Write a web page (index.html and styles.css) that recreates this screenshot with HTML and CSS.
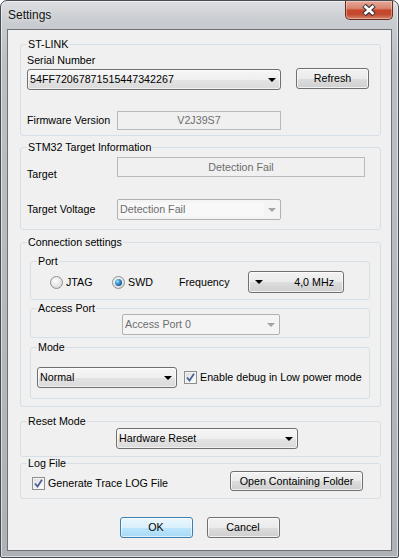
FILE: index.html
```html
<!DOCTYPE html>
<html>
<head>
<meta charset="utf-8">
<title>Settings</title>
<link rel="stylesheet" href="styles.css">
</head>
<body>
<div class="window">
  <div class="titlebar">
    <span class="title">Settings</span>
    <div class="close">
      <svg width="16" height="12" viewBox="0 0 16 12">
        <path d="M3 1.5 L13 10.5 M13 1.5 L3 10.5" stroke="#3a3a3a" stroke-width="5" fill="none"/>
        <path d="M3.5 2 L12.5 10 M12.5 2 L3.5 10" stroke="#ffffff" stroke-width="2.6" fill="none"/>
      </svg>
    </div>
  </div>
  <div class="client">
    <fieldset class="group g-stlink">
      <legend>ST-LINK</legend>
      <div class="gbody b-stlink">
        <div class="lbl">Serial Number</div>
        <div class="row r-serial">
          <div class="combo cb-serial"><span>54FF72067871515447342267</span><span class="arrow"></span></div>
          <div class="btn b-refresh">Refresh</div>
        </div>
        <div class="row r-fw">
          <span class="lbl w90">Firmware Version</span>
          <div class="field f-fw">V2J39S7</div>
        </div>
      </div>
    </fieldset>

    <fieldset class="group g-target">
      <legend>STM32 Target Information</legend>
      <div class="gbody b-target">
        <div class="row r-target">
          <span class="lbl w90 lbl-low">Target</span>
          <div class="field f-target">Detection Fail</div>
        </div>
        <div class="row r-volt">
          <span class="lbl w90">Target Voltage</span>
          <div class="combo dis cb-volt"><span class="dtext">Detection Fail</span><span class="arrow"></span></div>
        </div>
      </div>
    </fieldset>

    <fieldset class="group g-conn">
      <legend>Connection settings</legend>
      <div class="gbody b-conn">
        <fieldset class="group sub g-port">
          <legend>Port</legend>
          <div class="gbody b-port">
            <div class="row r-port">
              <span class="opt o-jtag"><span class="radio"></span><span class="otext">JTAG</span></span>
              <span class="opt o-swd"><span class="radio on"><span class="rdot"></span></span><span class="otext">SWD</span></span>
              <span class="lbl l-freq">Frequency</span>
              <div class="btn b-freq"><span class="arrow"></span><span>4,0 MHz</span></div>
            </div>
          </div>
        </fieldset>
        <fieldset class="group sub g-ap">
          <legend>Access Port</legend>
          <div class="gbody b-ap">
            <div class="combo dis cb-ap"><span>Access Port 0</span><span class="arrow"></span></div>
          </div>
        </fieldset>
        <fieldset class="group sub g-mode">
          <legend>Mode</legend>
          <div class="gbody b-mode">
            <div class="row r-mode">
              <div class="combo cb-mode"><span>Normal</span><span class="arrow"></span></div>
              <span class="chk c-mode">
                <svg width="9" height="9" viewBox="0 0 9 9"><path d="M1 4.5 L3.5 7.5 L8 0.8" stroke="#4a5f97" stroke-width="1.8" fill="none"/></svg>
              </span>
              <span class="lbl l-mode">Enable debug in Low power mode</span>
            </div>
          </div>
        </fieldset>
      </div>
    </fieldset>

    <fieldset class="group g-reset">
      <legend>Reset Mode</legend>
      <div class="gbody b-reset">
        <div class="combo cb-reset"><span>Hardware Reset</span><span class="arrow"></span></div>
      </div>
    </fieldset>

    <fieldset class="group g-log">
      <legend>Log File</legend>
      <div class="gbody b-log">
        <div class="row r-log">
          <span class="logchk">
            <span class="chk">
              <svg width="9" height="9" viewBox="0 0 9 9"><path d="M1 4.5 L3.5 7.5 L8 0.8" stroke="#4a5f97" stroke-width="1.8" fill="none"/></svg>
            </span>
            <span class="lbl l-log">Generate Trace LOG File</span>
          </span>
          <div class="btn b-open">Open Containing Folder</div>
        </div>
      </div>
    </fieldset>

    <div class="dlg-buttons">
      <div class="btn b-ok">OK</div>
      <div class="btn b-cancel">Cancel</div>
    </div>
  </div>
</div>
</body>
</html>
```

FILE: styles.css
```css
* { box-sizing: border-box; }
html, body { margin: 0; padding: 0; }
body {
  width: 399px;
  height: 558px;
  overflow: hidden;
  background: #ffffff;
  font-family: "Liberation Sans", Arial, sans-serif;
  font-size: 10.7px;
  line-height: 13px;
  color: #000;
}
.window {
  width: 399px;
  height: 558px;
  border: 1px solid #474c52;
  border-radius: 7px 7px 2px 2px;
  background: linear-gradient(to bottom, #dcdee1 0px, #c9ccd0 20px, #bcc0c4 60px, #aeb2b7 100%);
  display: flex;
  flex-direction: column;
  overflow: hidden;
  box-shadow: inset 0 0 0 1px rgba(255,255,255,0.55);
}
.titlebar {
  height: 28px;
  flex: none;
  display: flex;
  justify-content: space-between;
  align-items: flex-start;
  padding: 0 5px 0 7px;
}
.title {
  font-size: 12px;
  line-height: 15px;
  margin-top: 7px;
  color: #111;
  text-shadow: 0 0 6px rgba(255,255,255,0.9);
}
.close {
  width: 48px;
  height: 19px;
  border: 1px solid #6a2a1c;
  border-top: none;
  border-radius: 0 0 5px 5px;
  background: linear-gradient(to bottom, #e6a898 0%, #d88670 40%, #c6462c 52%, #c24a30 75%, #d7866c 100%);
  box-shadow: inset 0 0 0 1px rgba(255,255,255,0.35);
  display: flex;
  align-items: center;
  justify-content: center;
}
.client {
  flex: none;
  height: 522px;
  margin: 0 6px;
  border: 1px solid #6e7175;
  background: #f0f0f0;
  display: flex;
  flex-direction: column;
}
.group {
  margin: 0 10px 0 12px;
  padding: 0;
  border: 1px solid #d5dfe5;
  border-radius: 3px;
  min-width: 0;
}
.group > legend {
  padding: 0 1px;
  margin-left: 6px;
  font-size: 10.7px;
  line-height: 13px;
}
.sub { margin: 0; }

.row { display: flex; align-items: center; }
.lbl { white-space: nowrap; }
.w90 { width: 90px; flex: none; }

.arrow {
  width: 0; height: 0;
  border-left: 4px solid transparent;
  border-right: 4px solid transparent;
  border-top: 4px solid #000;
  flex: none;
}
.combo {
  height: 21px;
  border: 1px solid #707070;
  border-radius: 3px;
  background: linear-gradient(to bottom, #f6f6f6 0%, #efefef 50%, #e3e3e3 51%, #dadada 100%);
  box-shadow: inset 0 0 0 1px rgba(255,255,255,0.6);
  display: flex;
  align-items: center;
  justify-content: space-between;
  padding: 0 4px 0 2px;
  white-space: nowrap;
  flex: none;
}
.combo.dis {
  border-color: #adb2b5;
  border-radius: 2px;
  background: #f4f4f4;
  box-shadow: none;
  color: #6d6d6d;
}
.combo.dis .arrow { border-top-color: #a3a3a3; }
.field {
  border: 1px solid #b9b9b9;
  background: #f0f0f0;
  color: #6d6d6d;
  display: flex;
  align-items: center;
  justify-content: center;
  flex: none;
}
.btn {
  height: 21px;
  border: 1px solid #707070;
  border-radius: 3px;
  background: linear-gradient(to bottom, #f2f2f2 0%, #ebebeb 50%, #dddddd 51%, #cfcfcf 100%);
  box-shadow: inset 0 0 0 1px rgba(255,255,255,0.7);
  display: flex;
  align-items: center;
  justify-content: center;
  white-space: nowrap;
  flex: none;
}

/* ST-LINK */
.g-stlink { margin-top: 8px; }
.b-stlink { padding: 3px 0 5px 6px; }
.r-serial { margin-top: 1px; height: 22px; align-items: flex-start; }
.cb-serial { width: 254px; margin-top: 1px; }
.b-refresh { width: 73px; margin-left: 15px; }
.r-fw { margin-top: 21px; height: 19px; }
.f-fw { width: 164px; height: 19px; }

/* Target */
.g-target { margin-top: 5px; }
.b-target { padding: 3px 0 9px 6px; }
.r-target { height: 24px; align-items: flex-start; }
.lbl-low { margin-top: 11px; }
.f-target { width: 248px; height: 20px; }
.r-volt { margin-top: 18px; height: 21px; }
.cb-volt { width: 164px; }
.dtext { background: #f8f8f8; padding-right: 12px; width: 144px; }

/* Connection */
.g-conn { margin-top: 6px; }
.b-conn { padding: 6px 10px 7px 9px; }
.g-port { margin-top: 0; }
.b-port { padding: 3px 0 6px 19px; }
.r-port { height: 22px; }
.opt { display: flex; align-items: center; flex: none; }
.o-jtag { width: 62px; }
.o-swd { width: 67px; }
.otext { margin-left: 3px; }
.radio {
  width: 13px; height: 13px;
  border-radius: 50%;
  border: 1px solid #8e8f8f;
  background: radial-gradient(circle at 40% 35%, #ffffff 0%, #e8e8e8 50%, #cfcfcf 100%);
  display: flex; align-items: center; justify-content: center;
  flex: none;
}
.rdot {
  width: 7px; height: 7px;
  border-radius: 50%;
  background: radial-gradient(circle at 35% 35%, #a6e2ff 0%, #3f9ad6 35%, #1a5c98 70%, #0f3d6b 100%);
}
.l-freq { width: 69px; }
.b-freq { width: 96px; height: 22px; justify-content: space-between; padding: 0 9px 0 6px; }
.g-ap { margin-top: 2px; }
.b-ap { padding: 0 0 2px 91px; }
.cb-ap { width: 158px; margin-top: -1px; }
.g-mode { margin-top: 3px; }
.b-mode { padding: 13px 0 10px 6px; }
.r-mode { height: 21px; }
.cb-mode { width: 140px; }
.chk {
  width: 13px; height: 13px;
  border: 1px solid #8e8f8f;
  background: linear-gradient(135deg, #d8d8d8 0%, #f2f2f2 60%, #ffffff 100%);
  box-shadow: inset 0 0 0 1px #f4f4f4;
  display: flex; align-items: center; justify-content: center;
  flex: none;
}
.c-mode { margin-left: 7px; }
.l-mode { margin-left: 3px; }

/* Reset */
.g-reset { margin-top: 8px; }
.b-reset { padding: 0 0 7px 95px; }
.cb-reset { width: 182px; }

/* Log */
.g-log { margin-top: 0; }
.b-log { padding: 1px 0 7px 11px; }
.r-log { height: 20px; align-items: flex-start; }
.logchk { display: flex; align-items: center; width: 198px; margin-top: 6px; flex: none; }
.l-log { margin-left: 3px; }
.b-open { width: 133px; height: 20px; }

/* Dialog buttons */
.dlg-buttons {
  display: flex;
  justify-content: center;
  gap: 14px;
  margin-top: 18px;
}
.b-ok, .b-cancel { width: 73px; }
.b-ok {
  border-color: #3c7fb1;
  background: linear-gradient(to bottom, #eaf6fd 0%, #d9f0fc 50%, #bee6fd 51%, #a7d9f5 100%);
  box-shadow: inset 0 0 0 1px rgba(255,255,255,0.6);
}
```
